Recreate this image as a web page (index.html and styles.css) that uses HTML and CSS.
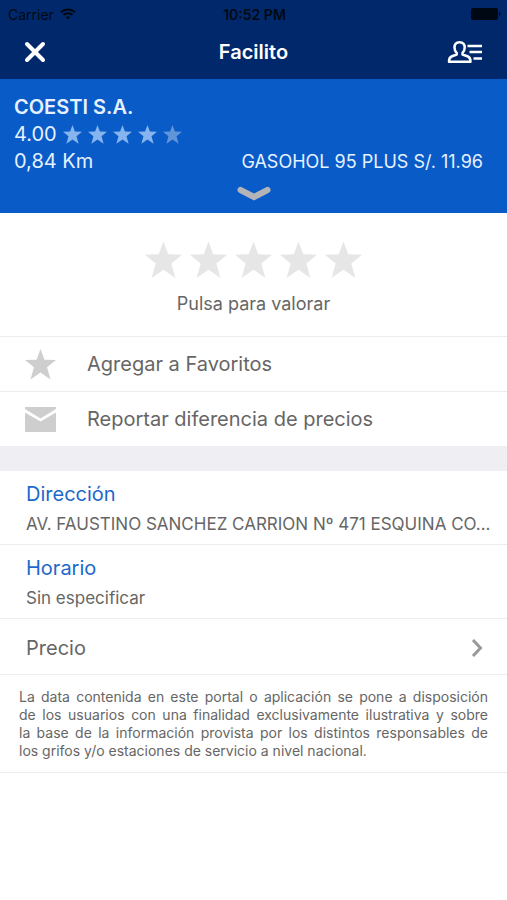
FILE: index.html
```html
<!DOCTYPE html>
<html lang="es">
<head>
  <meta charset="UTF-8">
  <meta name="viewport" content="width=device-width, initial-scale=1.0">
  <title>Facilito</title>
  <link rel="stylesheet" href="styles.css">
</head>
<body>
  <!-- shared star shape -->
  <svg class="sprite" aria-hidden="true">
    <symbol id="star" viewBox="0 0 36 36">
      <path d="M18 0l4.600 12.400L36 12.900 25.600 21.300 29.600 35.500 18 27.400 6.400 35.500 10.400 21.300 0 12.900l13.400-.5z" fill="currentColor"/>
    </symbol>
  </svg>

  <header class="top">
    <div class="status-bar">
      <span class="carrier">Carrier
        <svg width="16" height="12" viewBox="0 0 16 12" fill="none" stroke="currentColor" stroke-width="2">
          <path d="M1 4.300C5 .4 11 .4 15 4.300M3.600 7c2.500-2.500 6.300-2.500 8.800 0"/>
          <path d="M8 11.500L5.800 9.200c1.300-1.200 3.100-1.200 4.400 0z" fill="currentColor" stroke="none"/>
        </svg>
      </span>
      <span class="time">10:52 PM</span>
      <svg class="battery" width="30" height="12" viewBox="0 0 30 12" fill="currentColor">
        <rect width="27" height="12" rx="2"/>
        <path d="M28 4c2 .6 2 3.400 0 4z"/>
      </svg>
    </div>
    <nav class="nav-bar">
      <button class="icon-btn" aria-label="Cerrar">
        <svg width="22" height="22" viewBox="0 0 22 22" fill="none" stroke="currentColor" stroke-width="4" stroke-linecap="round">
          <path d="M3 3l16 16M19 3L3 19"/>
        </svg>
      </button>
      <h1>Facilito</h1>
      <button class="icon-btn" aria-label="Perfil">
        <svg width="36" height="24" viewBox="0 0 36 24" fill="none" stroke="currentColor" stroke-width="2.500" stroke-linejoin="round">
          <path d="M12.500 2.200c-3.300 0-5 2.300-5 5.300 0 2.300.8 4.200 2.200 5.500v1.500L4.500 16.500C2.600 17.300 2 19 2 21.700h21.500c0-2.700-.6-4.400-2.500-5.200l-5.500-2V13c1.400-1.300 2.200-3.200 2.200-5.500 0-3-1.700-5.300-5.200-5.300z"/>
          <path d="M20.500 6H35M22.500 12H35M26.500 18.500H35"/>
        </svg>
      </button>
    </nav>
  </header>

  <section class="summary">
    <h2>COESTI S.A.</h2>
    <div class="score">
      <span>4.00</span>
      <span class="score-stars">
        <svg><use href="#star"/></svg>
        <svg><use href="#star"/></svg>
        <svg><use href="#star"/></svg>
        <svg><use href="#star"/></svg>
        <svg class="dim"><use href="#star"/></svg>
      </span>
    </div>
    <div class="summary-row">
      <span>0,84 Km</span>
      <span class="fuel">GASOHOL 95 PLUS S/. 11.96</span>
    </div>
    <button class="expand" aria-label="Ver más">
      <svg width="34" height="16" viewBox="0 0 34 16" fill="none" stroke="currentColor" stroke-width="6" stroke-linecap="round">
        <path d="M3.500 4L17 11 30.500 4"/>
      </svg>
    </button>
  </section>

  <main>
    <section class="rate">
      <div class="rate-stars">
        <button aria-label="1 estrella"><svg><use href="#star"/></svg></button>
        <button aria-label="2 estrellas"><svg><use href="#star"/></svg></button>
        <button aria-label="3 estrellas"><svg><use href="#star"/></svg></button>
        <button aria-label="4 estrellas"><svg><use href="#star"/></svg></button>
        <button aria-label="5 estrellas"><svg><use href="#star"/></svg></button>
      </div>
      <p>Pulsa para valorar</p>
    </section>

    <button class="action">
      <svg class="action-icon"><use href="#star"/></svg>
      Agregar a Favoritos
    </button>
    <button class="action">
      <svg class="action-icon" viewBox="0 0 31 31" fill="currentColor">
        <path d="M0 3h31v2L15.500 14.500 0 5z"/>
        <path d="M0 8.500l15.500 9L31 8.500V28H0z"/>
      </svg>
      Reportar diferencia de precios
    </button>

    <div class="separator"></div>

    <section class="info">
      <h3>Dirección</h3>
      <p>AV. FAUSTINO SANCHEZ CARRION Nº 471 ESQUINA CO...</p>
    </section>
    <section class="info">
      <h3>Horario</h3>
      <p>Sin especificar</p>
    </section>
    <a class="price" href="#precio">
      Precio
      <svg width="12" height="20" viewBox="0 0 12 20" fill="none" stroke="currentColor" stroke-width="3">
        <path d="M2 2l7.500 8L2 18"/>
      </svg>
    </a>
    <p class="legal">La data contenida en este portal o aplicación se pone a disposición de&nbsp;los usuarios con una finalidad exclusivamente ilustrativa y sobre la&nbsp;base de la información provista por los distintos responsables de los&nbsp;grifos y/o estaciones de servicio a nivel nacional.</p>
  </main>
</body>
</html>
```

FILE: styles.css
```css
* {
  box-sizing: border-box;
}
body {
  margin: 0;
  min-height: 100vh;
  background-color: #fff;
  color: #666;
  font-family: Inter, "Liberation Sans", sans-serif;
  font-size: 20px;
}
h1, h2, h3, p {
  margin: 0;
}
button {
  padding: 0;
  border: none;
  background: none;
  color: inherit;
  font: inherit;
  cursor: pointer;
}
svg {
  display: block;
}
.sprite {
  display: none;
}

/* header */
.top {
  background-color: #00286a;
}
.status-bar {
  display: grid;
  grid-template-columns: 1fr auto 1fr;
  align-items: center;
  height: 28px;
  padding: 0 6px 0 8px;
  color: #000814;
  font-size: 14px;
}
.carrier {
  display: flex;
  align-items: center;
  gap: 6px;
}
.time {
  font-weight: 600;
}
.battery {
  justify-self: end;
}
.nav-bar {
  display: flex;
  align-items: center;
  justify-content: space-between;
  height: 51px;
  padding: 0 24px 4px;
  color: #fff;
}
.nav-bar h1 {
  font-size: 20px;
  font-weight: 600;
}
.icon-btn {
  display: flex;
  width: 36px;
}

/* station summary */
.summary {
  height: 134px;
  padding: 15px 14px 0;
  background-color: #095bc8;
  color: #e6f1ff;
  line-height: 27px;
}
.summary h2 {
  font-size: 20px;
  font-weight: 600;
}
.score,
.summary-row {
  display: flex;
  align-items: center;
}
.score {
  gap: 6px;
}
.score-stars {
  display: flex;
  gap: 6px;
  color: #86b4ee;
}
.score-stars svg {
  width: 19px;
  height: 19px;
}
.score-stars .dim {
  color: #6095d8;
}
.summary-row {
  justify-content: space-between;
  padding-right: 10px;
}
.fuel {
  font-size: 18px;
}
.expand {
  display: block;
  margin: 11px auto 0;
  color: #b4b4b8;
}

/* rating */
.rate {
  display: flex;
  flex-direction: column;
  align-items: center;
  gap: 14px;
  height: 123px;
  padding-top: 28px;
  font-size: 18px;
}
.rate-stars {
  display: flex;
  gap: 8px;
  color: #e6e6e6;
}
.rate-stars svg {
  width: 37px;
  height: 38px;
}

/* rows */
.action,
.price {
  display: flex;
  align-items: center;
  width: 100%;
  height: 55px;
  border-top: 1px solid #ececec;
  text-align: left;
}
.action {
  gap: 31px;
  padding: 0 25px;
}
.action-icon {
  width: 31px;
  height: 31px;
  color: #cecece;
}
.separator {
  height: 25px;
  background-color: #eeeef3;
}
.info {
  height: 74px;
  padding: 9px 16px 0 26px;
  border-bottom: 1px solid #ececec;
}
.info h3 {
  color: #1c68cb;
  font-size: 20px;
  font-weight: 400;
  line-height: 28px;
}
.info p {
  overflow: hidden;
  font-size: 17px;
  line-height: 32px;
  text-overflow: ellipsis;
  white-space: nowrap;
}
.price {
  justify-content: space-between;
  height: 56px;
  padding: 2px 24px 0 26px;
  border-top: none;
  border-bottom: 1px solid #ececec;
  color: inherit;
  text-decoration: none;
}
.price svg {
  color: #999;
}
.legal {
  padding: 13px 19px 12px;
  border-bottom: 1px solid #ececec;
  font-size: 14px;
  line-height: 18px;
  text-align: justify;
}
```
